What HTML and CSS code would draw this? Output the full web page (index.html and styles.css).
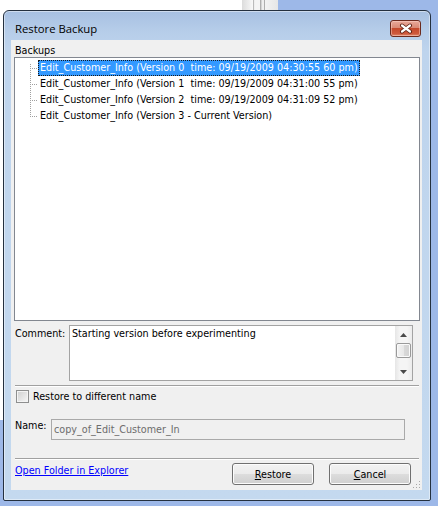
FILE: index.html
```html
<!DOCTYPE html>
<html>
<head>
<meta charset="utf-8">
<title>Restore Backup</title>
<link rel="stylesheet" href="styles.css">
</head>
<body>
<div class="window">
  <div class="titlebar">
    <span class="title">Restore Backup</span>
    <button class="close" aria-label="Close">
      <svg width="14" height="11" viewBox="0 0 14 11">
        <path d="M3 2.5 L11 8.5 M11 2.5 L3 8.5" stroke="#5a1d10" stroke-width="4" stroke-linecap="round" fill="none"/>
        <path d="M3 2.5 L11 8.5 M11 2.5 L3 8.5" stroke="#ffffff" stroke-width="2.2" stroke-linecap="round" fill="none"/>
      </svg>
    </button>
  </div>
  <div class="client">
    <div class="label backups-label">Backups</div>
    <div class="tree">
      <div class="row first"><span class="conn"></span><span class="item selected">Edit_Customer_Info (Version 0  time: 09/19/2009 04:30:55 60 pm)</span></div>
      <div class="row"><span class="conn"></span><span class="item">Edit_Customer_Info (Version 1  time: 09/19/2009 04:31:00 55 pm)</span></div>
      <div class="row"><span class="conn"></span><span class="item">Edit_Customer_Info (Version 2  time: 09/19/2009 04:31:09 52 pm)</span></div>
      <div class="row last"><span class="conn"></span><span class="item">Edit_Customer_Info (Version 3 - Current Version)</span></div>
    </div>
    <div class="comment-row">
      <span class="label comment-label">Comment:</span>
      <div class="textarea">
        <div class="textarea-text">Starting version before experimenting</div>
        <div class="vscroll">
          <div class="sb-btn"><svg width="7" height="4" viewBox="0 0 7 4"><polygon points="0,4 3.5,0 7,4" fill="#4a4a4a"/></svg></div>
          <div class="sb-thumb"></div>
          <div class="sb-track"></div>
          <div class="sb-btn"><svg width="7" height="4" viewBox="0 0 7 4"><polygon points="0,0 3.5,4 7,0" fill="#4a4a4a"/></svg></div>
        </div>
      </div>
    </div>
    <div class="sep"></div>
    <div class="check-row"><span class="checkbox"></span><span class="check-label">Restore to different name</span></div>
    <div class="name-row">
      <span class="label name-label">Name:</span>
      <div class="textbox">copy_of_Edit_Customer_In</div>
    </div>
    <div class="sep sep2"></div>
    <div class="bottom-row">
      <a class="link" href="#">Open Folder in Explorer</a>
      <div class="buttons">
        <button class="btn"><u>R</u>estore</button>
        <button class="btn"><u>C</u>ancel</button>
      </div>
      <svg class="grip" width="8" height="8" viewBox="0 0 8 8">
        <rect x="6" y="0" width="1" height="1" fill="#a8a8a8"/>
        <rect x="3" y="3" width="1" height="1" fill="#a8a8a8"/>
        <rect x="6" y="3" width="1" height="1" fill="#a8a8a8"/>
        <rect x="0" y="6" width="1" height="1" fill="#a8a8a8"/>
        <rect x="3" y="6" width="1" height="1" fill="#a8a8a8"/>
        <rect x="6" y="6" width="1" height="1" fill="#a8a8a8"/>
      </svg>
    </div>
  </div>
</div>
</body>
</html>
```

FILE: styles.css
```css
* { box-sizing: border-box; }
html, body { margin: 0; }
body {
  width: 438px;
  height: 506px;
  overflow: hidden;
  padding: 10px 0 0 3px;
  background:
    linear-gradient(90deg, #dcdcdc 0, #f8f8f8 30%, #b8b8b8 32%, #f4f4f4 35%, #f4f4f4 50%, #8f8f8f 52%, #eeeeee 55%, #eeeeee 60%, #a0a0a0 62%, #f2f2f2 65%, #e6e6e6 100%) 242px 0 / 36px 10px no-repeat,
    linear-gradient(#ffffff, #ffffff) 0 0 / 242px 420px no-repeat,
    #9db8e8;
  font-family: "DejaVu Sans Condensed", "DejaVu Sans", sans-serif;
  font-stretch: condensed;
  font-size: 10.7px;
  color: #000;
}

.window {
  width: 428px;
  height: 491px;
  border: 1px solid #24303f;
  border-radius: 6px 6px 2px 2px;
  background: linear-gradient(#a7c0e2 0, #b6cde9 20px, #bed4ed 40px, #c4d9ef 100%);
  box-shadow: inset 0 0 0 1px rgba(255, 255, 255, 0.45);
  display: flex;
  flex-direction: column;
}

.titlebar {
  height: 29px;
  flex: none;
  display: flex;
  align-items: center;
  justify-content: space-between;
  padding: 6px 9px 0 11px;
}
.title {
  font-family: "Open Sans", "Noto Sans", sans-serif;
  font-stretch: normal;
  font-size: 11.3px;
  color: #000;
}
.close {
  width: 31px;
  height: 17px;
  padding: 0;
  border: 1px solid #6b2a1e;
  border-radius: 3px;
  background: linear-gradient(#e9a99a 0, #d98a76 45%, #c4492c 50%, #cf5a3d 85%, #e08f74 100%);
  box-shadow: inset 0 0 0 1px rgba(255, 220, 210, 0.45);
  display: flex;
  align-items: center;
  justify-content: center;
}

.client {
  margin: 0 8px 0 7px;
  height: 450px;
  flex: none;
  background: #f0f0f0;
  padding-top: 4px;
  display: flex;
  flex-direction: column;
}

.label { line-height: 13px; }
.backups-label { margin-left: 4px; height: 13px; }

.tree {
  margin-left: 3px;
  width: 406px;
  height: 264px;
  flex: none;
  border: 1px solid #828790;
  background: #fff;
  padding-top: 2px;
}
.row {
  display: flex;
  height: 16px;
}
.conn {
  width: 23px;
  flex: none;
  background:
    repeating-linear-gradient(to right, #a0a0a0 0 1px, transparent 1px 2px) 15px 8px / 8px 1px no-repeat,
    repeating-linear-gradient(to bottom, #a0a0a0 0 1px, transparent 1px 2px) 15px 0 / 1px 16px no-repeat;
}
.row.first .conn {
  background:
    repeating-linear-gradient(to right, #a0a0a0 0 1px, transparent 1px 2px) 15px 8px / 8px 1px no-repeat,
    repeating-linear-gradient(to bottom, #a0a0a0 0 1px, transparent 1px 2px) 15px 4px / 1px 12px no-repeat;
}
.row.last .conn {
  background:
    repeating-linear-gradient(to right, #a0a0a0 0 1px, transparent 1px 2px) 15px 8px / 8px 1px no-repeat,
    repeating-linear-gradient(to bottom, #a0a0a0 0 1px, transparent 1px 2px) 15px 0 / 1px 8px no-repeat;
}
.item {
  white-space: pre;
  height: 16px;
  line-height: 14px;
  padding: 0 1px;
  border: 1px dotted transparent;
}
.item.selected {
  background: #3399ff;
  color: #fff;
  border-color: #1a1a1a;
}

.comment-row {
  margin-top: 4px;
  padding-left: 4px;
  display: flex;
  align-items: flex-start;
}
.comment-label {
  width: 54px;
  padding-top: 2px;
}
.textarea {
  width: 344px;
  height: 56px;
  border: 1px solid #a3a3a3;
  background: #fff;
  display: flex;
}
.textarea-text {
  flex: 1;
  padding: 1px 2px;
  line-height: 13px;
}
.vscroll {
  width: 17px;
  flex: none;
  display: flex;
  flex-direction: column;
  background: linear-gradient(90deg, #e6e6e6, #f5f5f5 30%, #f5f5f5 70%, #ececec);
}
.sb-btn {
  height: 17px;
  flex: none;
  display: flex;
  align-items: center;
  justify-content: center;
}
.sb-thumb {
  height: 15px;
  flex: none;
  margin: 0 1px;
  border: 1px solid #9a9a9a;
  border-radius: 2px;
  background: linear-gradient(90deg, #f3f3f3, #e8e8e8 50%, #d9d9d9 51%, #d2d2d2);
  box-shadow: inset 0 0 0 1px #fafafa;
}
.sb-track { flex: 1; }

.sep {
  margin: 4px 3px 0 4px;
  height: 2px;
  flex: none;
  border-top: 1px solid #a0a0a0;
  border-bottom: 1px solid #ffffff;
}
.sep2 { margin-top: 18px; }

.check-row {
  margin-top: 3px;
  margin-left: 5px;
  display: flex;
  align-items: center;
  height: 13px;
}
.checkbox {
  width: 13px;
  height: 13px;
  border: 1px solid #8e8f8f;
  background: linear-gradient(135deg, #cfcfcf, #f7f7f7);
  box-shadow: inset 0 0 0 1px #f4f4f4;
}
.check-label { margin-left: 4px; line-height: 13px; }

.name-row {
  margin-top: 16px;
  padding-left: 4px;
  display: flex;
  align-items: flex-start;
}
.name-label { width: 36px; padding-top: 1px; line-height: 12px; }
.textbox {
  width: 354px;
  height: 21px;
  border: 1px solid #a9a9a9;
  background: #f0f0f0;
  color: #6d6d6d;
  padding-left: 2px;
  line-height: 19px;
}

.bottom-row {
  margin-top: 3px;
  padding-left: 4px;
  height: 27px;
  display: flex;
  align-items: flex-start;
}
.link {
  color: #0000ff;
  text-decoration: underline;
  line-height: 13px;
  margin-top: 1px;
}
.buttons {
  margin-left: auto;
  display: flex;
  gap: 15px;
}
.btn {
  width: 82px;
  height: 22px;
  padding: 0;
  border: 1px solid #707070;
  border-radius: 3px;
  background: linear-gradient(#f2f2f2 0, #ebebeb 50%, #dddddd 51%, #cfcfcf 100%);
  box-shadow: inset 0 0 0 1px #fcfcfc;
  font: inherit;
  color: #000;
}
.btn u { text-decoration: underline; }
.grip {
  align-self: flex-end;
  margin: 0 1px 1px 2px;
}
```
